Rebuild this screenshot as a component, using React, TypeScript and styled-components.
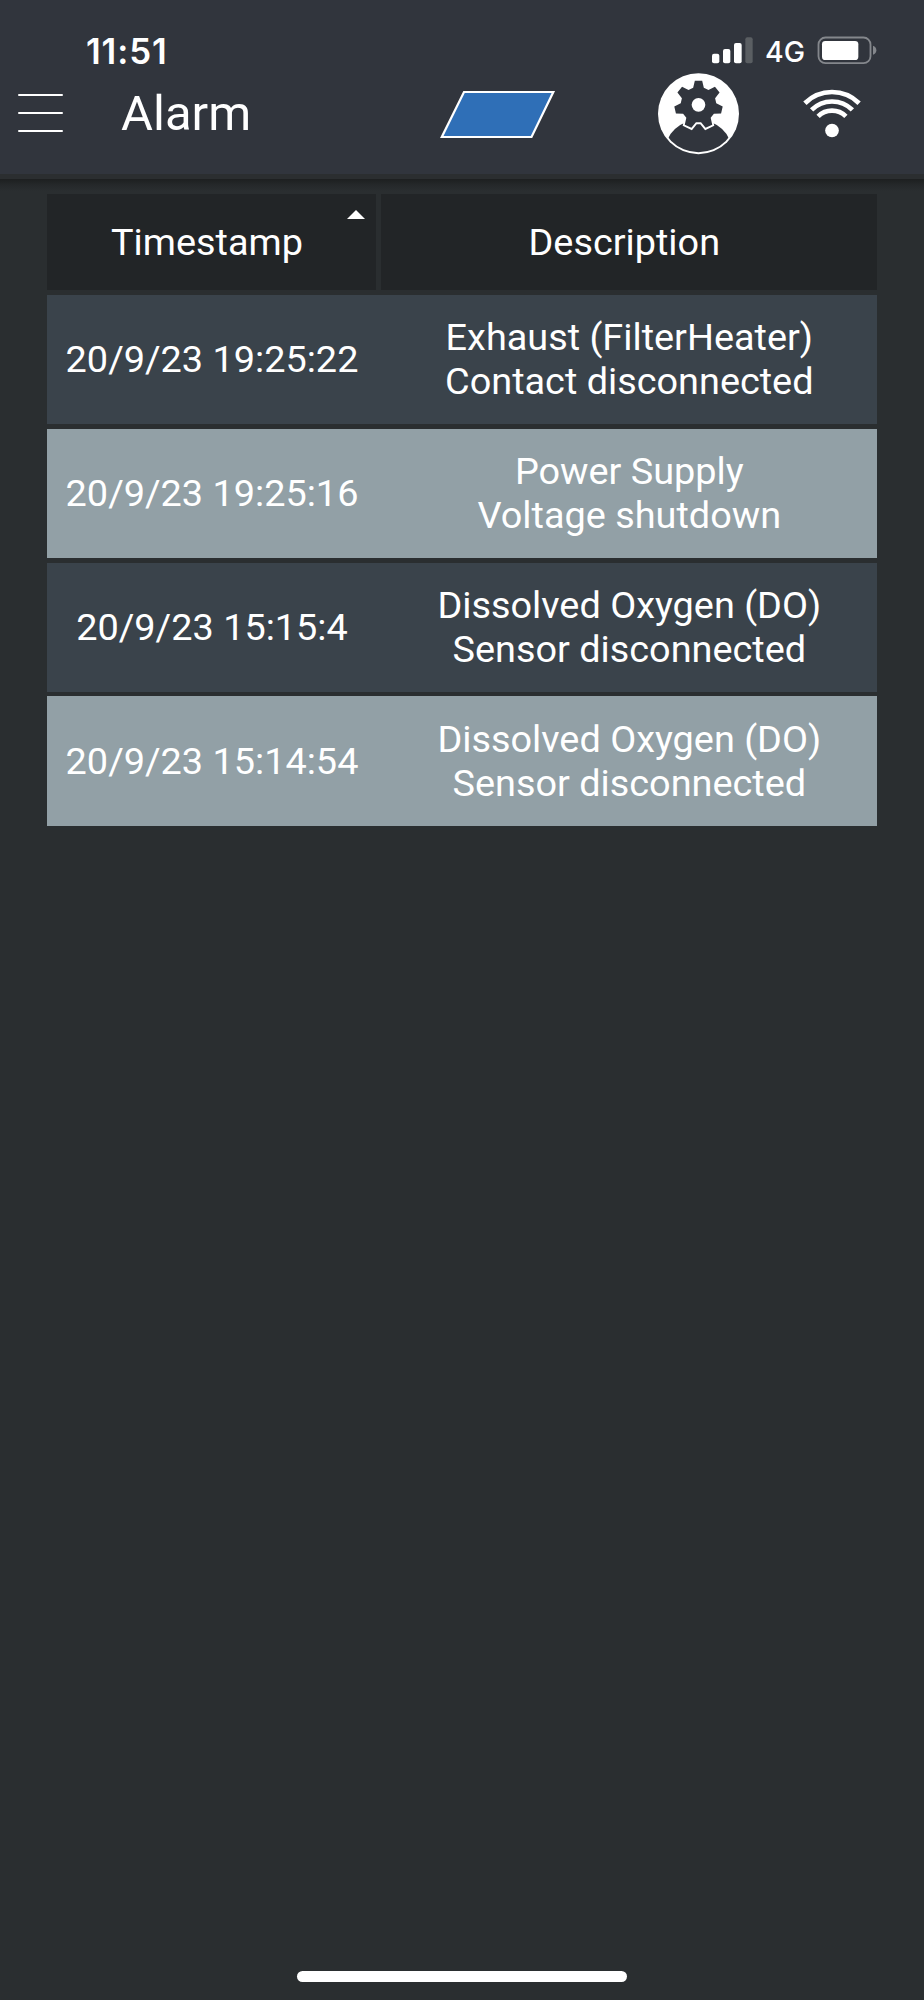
import React from 'react';
import styled, { createGlobalStyle } from 'styled-components';

const GlobalStyle = createGlobalStyle`
  *, *::before, *::after { box-sizing: border-box; }
  body {
    margin: 0;
    background: #2a2e30;
    color: #fff;
    font-family: Roboto, 'Liberation Sans', sans-serif;
  }
`;

const Screen = styled.div`
  display: flex;
  flex-direction: column;
  width: 924px;
  height: 2000px;
  overflow: hidden;
  background: #2a2e30;
`;

const Header = styled.header`
  flex: none;
  height: 174px;
  padding-top: 33px;
  background: #31353d;
`;

const HeaderShadow = styled.div`
  flex: none;
  height: 20px;
  background: linear-gradient(#2b2e30 0 5px, #1d1f20 5px, #25282a 11px, #2a2e30 17px);
`;

const StatusBar = styled.div`
  display: flex;
  justify-content: space-between;
  height: 36px;
  padding: 0 47px 0 86px;
  font-family: Inter, 'Liberation Sans', sans-serif;
  line-height: 36px;
`;

const Clock = styled.time`
  font-size: 34.8px;
  font-weight: 600;
  letter-spacing: 0.9px;
`;

const StatusIcons = styled.div`
  display: flex;
  align-items: flex-start;
`;

const Network = styled.span`
  width: 63px;
  padding-left: 11px;
  font-size: 28.5px;
  font-weight: 450;
  letter-spacing: 0;
  line-height: 38px;
`;

const NavBar = styled.nav`
  display: grid;
  grid-template-columns: 121px 319px 218px 144.3px 60px;
  align-items: start;
  height: 88px;
`;

const MenuButton = styled.button`
  display: flex;
  flex-direction: column;
  gap: 15.6px;
  width: 45px;
  margin: 25px 0 0 18px;
  padding: 0;
  border: 0;
  background: none;
`;

const MenuLine = styled.span`
  height: 2.4px;
  border-radius: 1px;
  background: #fff;
`;

const Title = styled.h1`
  margin: 17px 0 0;
  font-size: 49px;
  font-weight: 400;
  line-height: 56px;
`;

const Icon = styled.svg<{ $top?: number }>`
  display: block;
  margin-top: ${({ $top = 0 }) => $top}px;
`;

const Table = styled.div`
  display: flex;
  flex-direction: column;
  gap: 4.5px;
  width: 829.6px;
  margin-left: 47px;
  font-size: 37.85px;
  line-height: 44.66px;
  text-align: center;
`;

const TableHead = styled.div`
  display: grid;
  grid-template-columns: 329px 1fr;
  gap: 5px;
  height: 96.3px;
`;

const HeadCell = styled.div`
  position: relative;
  display: flex;
  align-items: center;
  justify-content: center;
  padding-right: 9px;
  background: #222527;
`;

const SortMark = styled.svg`
  position: absolute;
  top: 16px;
  right: 11px;
`;

const Row = styled.div<{ $light?: boolean }>`
  display: grid;
  grid-template-columns: 329px 1fr;
  gap: 5px;
  align-items: center;
  height: 129.4px;
  background: ${({ $light }) => ($light ? '#92a0a6' : '#3a434b')};
`;

const Cell = styled.div`
  padding-left: 1px;
  white-space: pre-line;
`;

const HomeIndicator = styled.div`
  width: 330px;
  height: 11px;
  margin: auto auto 18px;
  border-radius: 6px;
  background: #fff;
`;

const alarms = [
  { time: '20/9/23 19:25:22', source: 'Exhaust (FilterHeater)', message: 'Contact disconnected' },
  { time: '20/9/23 19:25:16', source: 'Power Supply', message: 'Voltage shutdown' },
  { time: '20/9/23 15:15:4', source: 'Dissolved Oxygen (DO)', message: 'Sensor disconnected' },
  { time: '20/9/23 15:14:54', source: 'Dissolved Oxygen (DO)', message: 'Sensor disconnected' },
];

// Seven-toothed cog outline centred on (cx, cy).
function cogPoints(cx: number, cy: number) {
  const profile: [number, number][] = [[-16, 51], [-11, 72], [11, 72], [16, 51]];
  const points: string[] = [];
  for (let i = 0; i < 7; i++) {
    const a = (i * 2 * Math.PI) / 7;
    for (const [x, r] of profile) {
      const px = cx + x * Math.cos(a) + r * Math.sin(a);
      const py = cy + x * Math.sin(a) - r * Math.cos(a);
      points.push(`${px.toFixed(1)},${py.toFixed(1)}`);
    }
  }
  return points.join(' ');
}

const SignalIcon = () => (
  <Icon $top={4} width="42" height="27" viewBox="66 51 126 81">
    <g fill="#fff">
      <rect x="66" y="101" width="22" height="29" rx="6" />
      <rect x="99" y="87" width="22" height="43" rx="6" />
      <rect x="132" y="69" width="23" height="61" rx="6" />
      <rect x="166" y="52" width="22" height="78" rx="6" fill="#5a5e62" />
    </g>
  </Icon>
);

const BatteryIcon = () => (
  <Icon $top={3} width="60" height="29" viewBox="381 48 180 87">
    <rect x="385.5" y="52.5" width="156" height="77" rx="21" fill="none" stroke="#84878c" strokeWidth="5.5" />
    <rect x="396" y="63" width="109" height="57" rx="10" fill="#fff" />
    <path d="M549 77 Q559 81 559 90.5 Q559 100 549 104 Z" fill="#84878c" />
  </Icon>
);

const UserIcon = () => (
  <Icon $top={4} width="81" height="82" viewBox="54 39 243 246">
    <defs>
      <clipPath id="disc">
        <circle cx="175.5" cy="161" r="115.5" />
      </clipPath>
    </defs>
    <circle cx="175.5" cy="161" r="121.5" fill="#fff" />
    <ellipse cx="175.5" cy="273" rx="100" ry="93" fill="#31353d" clipPath="url(#disc)" />
    <polygon points={cogPoints(175.5, 134)} fill="#31353d" stroke="#fff" strokeWidth="11" />
    <polygon points={cogPoints(175.5, 134)} fill="#31353d" />
    <circle cx="175.5" cy="134.5" r="20.5" fill="#fff" />
  </Icon>
);

const WifiIcon = () => (
  <Icon $top={20} width="60" height="50" viewBox="337 207 180 150">
    <g fill="none" stroke="#fff" strokeWidth="14">
      <path d="M345.7 249.7 A115 115 0 0 1 508.3 249.7" />
      <path d="M365.8 269.8 A86.5 86.5 0 0 1 488.2 269.8" />
      <path d="M385.3 289.3 A59 59 0 0 1 468.7 289.3" />
    </g>
    <circle cx="427" cy="331.5" r="20.5" fill="#fff" />
  </Icon>
);

export default function App() {
  return (
    <Screen>
      <GlobalStyle />
      <Header>
        <StatusBar>
          <Clock>11:51</Clock>
          <StatusIcons>
            <SignalIcon />
            <Network>4G</Network>
            <BatteryIcon />
          </StatusIcons>
        </StatusBar>
        <NavBar>
          <MenuButton aria-label="Menu">
            <MenuLine />
            <MenuLine />
            <MenuLine />
          </MenuButton>
          <Title>Alarm</Title>
          <Icon $top={21} width="116" height="49" viewBox="0 0 116 49">
            <path d="M24 2 H113.3 L91.5 47 H1.8 Z" fill="#2f6fb7" stroke="#fff" strokeWidth="2.2" />
          </Icon>
          <UserIcon />
          <WifiIcon />
        </NavBar>
      </Header>
      <HeaderShadow />
      <Table>
        <TableHead>
          <HeadCell>
            Timestamp
            <SortMark width="18" height="9" viewBox="0 0 18 9">
              <path d="M0 9 L9 0 L18 9 Z" fill="#fff" />
            </SortMark>
          </HeadCell>
          <HeadCell>Description</HeadCell>
        </TableHead>
        {alarms.map((alarm, i) => (
          <Row key={alarm.time} $light={i % 2 === 1}>
            <Cell>{alarm.time}</Cell>
            <Cell>{`${alarm.source}\n${alarm.message}`}</Cell>
          </Row>
        ))}
      </Table>
      <HomeIndicator />
    </Screen>
  );
}
